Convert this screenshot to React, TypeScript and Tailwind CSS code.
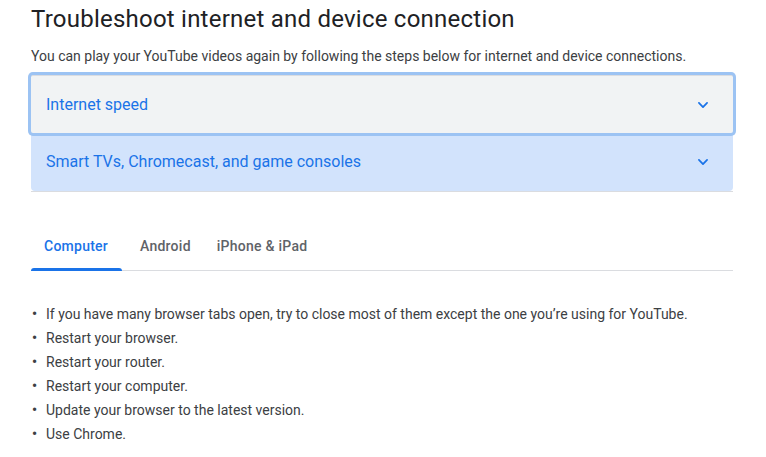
import { useState } from "react";

const items = [
  "Internet speed",
  "Smart TVs, Chromecast, and game consoles",
];

const tabs = ["Computer", "Android", "iPhone & iPad"];

const steps = [
  "If you have many browser tabs open, try to close most of them except the one you\u2019re using for YouTube.",
  "Restart your browser.",
  "Restart your router.",
  "Restart your computer.",
  "Update your browser to the latest version.",
  "Use Chrome.",
];

function Chevron() {
  return (
    <svg className="h-[14px] w-[14px]" viewBox="0 0 24 24" fill="none">
      <path
        d="M5 8.5l7 7 7-7"
        stroke="#1a73e8"
        strokeWidth={3}
        strokeLinecap="round"
        strokeLinejoin="round"
      />
    </svg>
  );
}

export default function App() {
  const [activeTab, setActiveTab] = useState("Computer");

  return (
    <div className="min-h-screen bg-white font-['Roboto',sans-serif]">
      <div className="w-[702px] ml-[31px] pt-[3px]">
        <h1 className="text-[24px] leading-[32px] tracking-[0.23px] text-[#202124] font-normal">
          Troubleshoot internet and device connection
        </h1>
        <p className="mt-[11px] text-[14px] leading-[20px] text-[#3c4043]">
          You can play your YouTube videos again by following the steps below
          for internet and device connections.
        </p>

        {/* Accordion */}
        <div className="mt-[9px] border-b border-[#dadce0]">
          {items.map((label, i) => (
            <button
              key={label}
              type="button"
              className={`relative flex h-[58px] w-full items-center justify-between pl-[15px] pr-[23px] text-left text-[16px] text-[#1a73e8] ${
                i === 0
                  ? "z-10 bg-[#f1f3f4] border-t border-[#dadce0] rounded-[2px] shadow-[0_0_0_3px_#9cc3f3]"
                  : "h-[56px] bg-[#d2e3fc] rounded-b-[4px]"
              }`}
            >
              <span>{label}</span>
              <Chevron />
            </button>
          ))}
        </div>

        {/* Tabs */}
        <div className="mt-[30px] flex border-b border-[#dadce0]">
          {tabs.map((tab, i) => (
            <button
              key={tab}
              type="button"
              onClick={() => setActiveTab(tab)}
              className={`relative h-[48px] text-left text-[14px] font-medium tracking-[0.25px] ${
                i === 0
                  ? "w-[91px] pl-[13px]"
                  : i === 1
                  ? "pl-[18px] pr-[13px]"
                  : "pl-[13px] pr-[13px]"
              } ${activeTab === tab ? "text-[#1a73e8]" : "text-[#5f6368]"}`}
            >
              {tab}
              {activeTab === tab && (
                <span className="absolute bottom-[-1px] left-0 right-0 h-[3px] rounded-t-[3px] bg-[#1a73e8]" />
              )}
            </button>
          ))}
        </div>

        {/* Steps */}
        <ul className="mt-[31px] text-[14px] leading-[24px] text-[#3c4043]">
          {steps.map((step) => (
            <li key={step} className="flex">
              <span className="w-[15px] shrink-0 pl-[1px] font-bold">{"\u2022"}</span>
              <span>{step}</span>
            </li>
          ))}
        </ul>
      </div>
    </div>
  );
}
